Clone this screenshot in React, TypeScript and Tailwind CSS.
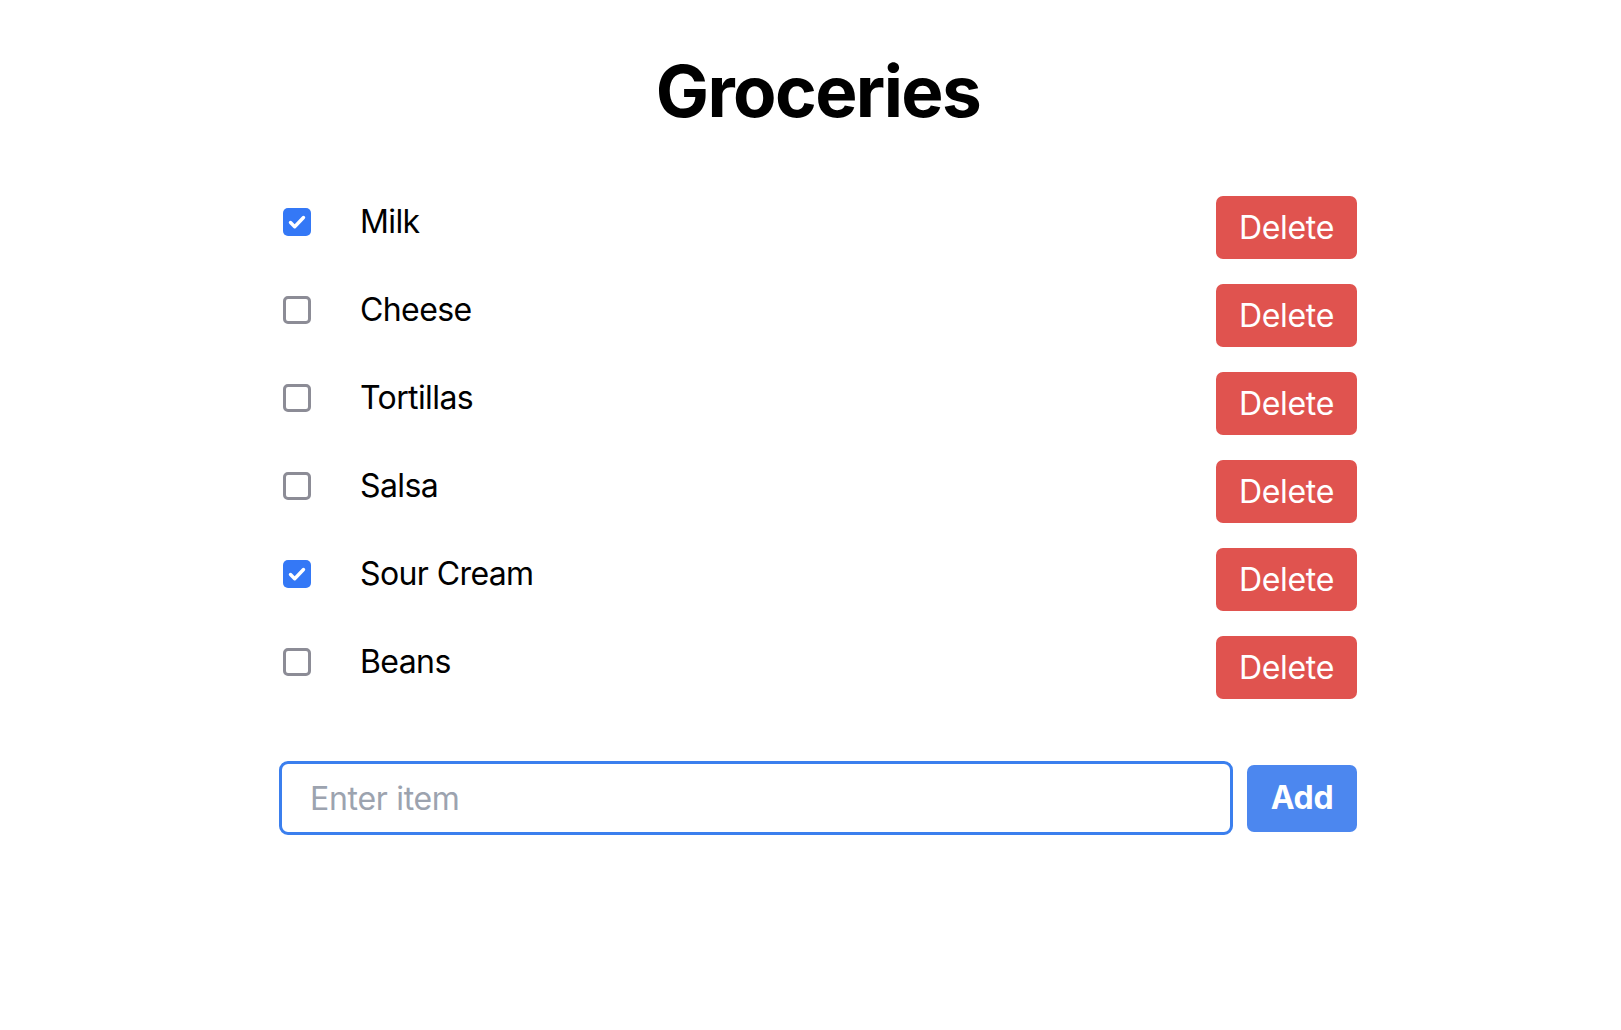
import { useState } from "react";

interface Item {
  id: number;
  name: string;
  done: boolean;
}

const initialItems: Item[] = [
  { id: 1, name: "Milk", done: true },
  { id: 2, name: "Cheese", done: false },
  { id: 3, name: "Tortillas", done: false },
  { id: 4, name: "Salsa", done: false },
  { id: 5, name: "Sour Cream", done: true },
  { id: 6, name: "Beans", done: false },
];

const Checkbox = ({ checked, onClick }: { checked: boolean; onClick: () => void }) => {
  if (checked) {
    return (
      <button
        onClick={onClick}
        className="flex items-center justify-center w-[28px] h-[28px] rounded-[5px] bg-[#3478f6] shrink-0"
      >
        <svg width="24" height="24" viewBox="0 0 24 24" fill="none">
          <path
            d="M5.5 12.5l4.2 4.2L18.5 7.5"
            stroke="white"
            strokeWidth="3.4"
            strokeLinecap="round"
            strokeLinejoin="round"
          />
        </svg>
      </button>
    );
  }
  return (
    <button
      onClick={onClick}
      className="w-[28px] h-[28px] rounded-[5px] border-[3px] border-[#8c8c96] bg-white shrink-0"
    />
  );
};

export default function App() {
  const [items, setItems] = useState<Item[]>(initialItems);
  const [text, setText] = useState("");

  const toggle = (id: number) => {
    setItems(items.map((i) => (i.id === id ? { ...i, done: !i.done } : i)));
  };

  const remove = (id: number) => {
    setItems(items.filter((i) => i.id !== id));
  };

  const add = () => {
    if (!text.trim()) return;
    setItems([...items, { id: Date.now(), name: text.trim(), done: false }]);
    setText("");
  };

  return (
    <div className="min-h-screen bg-white font-['Inter',sans-serif] text-black flex justify-center pl-[15px]">
      <div className="w-[1078px] flex flex-col">
        <h1 className="mt-[55px] text-[71px] leading-[72px] font-bold text-center tracking-[-1.6px]">
          Groceries
        </h1>

        <ul className="mt-[69px] flex flex-col gap-[25px]">
          {items.map((item) => (
            <li key={item.id} className="flex items-start justify-between">
              <div className="flex items-center mt-[12px] pl-[4px]">
                <Checkbox checked={item.done} onClick={() => toggle(item.id)} />
                <span className="ml-[49px] text-[32px] leading-[28px] tracking-[-0.6px]">{item.name}</span>
              </div>
              <button
                onClick={() => remove(item.id)}
                className="w-[141px] h-[63px] rounded-[7px] bg-[#e0534f] text-white text-[32px] leading-none tracking-[-0.3px]"
              >
                Delete
              </button>
            </li>
          ))}
        </ul>

        <div className="mt-[62px] flex items-center gap-[14px]">
          <input
            value={text}
            onChange={(e) => setText(e.target.value)}
            placeholder="Enter item"
            className="flex-1 h-[74px] rounded-[9px] border-[3px] border-[#3b7fee] px-[28px] text-[32px] tracking-[-0.3px] outline-none placeholder:text-[#9ca3af]"
          />
          <button
            onClick={add}
            className="w-[110px] h-[67px] rounded-[7px] bg-[#4c87ef] text-white text-[32px] font-bold leading-none tracking-[-0.3px]"
          >
            Add
          </button>
        </div>
      </div>
    </div>
  );
}
